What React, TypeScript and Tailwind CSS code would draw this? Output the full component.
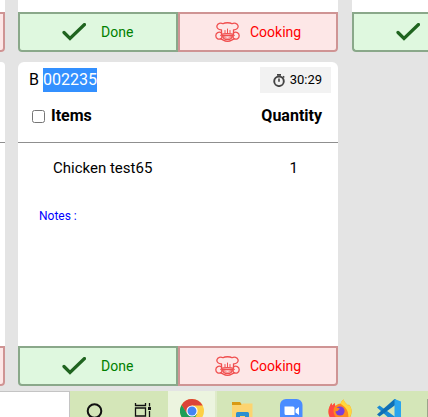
import React from 'react';
import clsx from 'clsx';

interface OrderItem {
  name: string;
  quantity: number;
}

const items: OrderItem[] = [{ name: 'Chicken test65', quantity: 1 }];

const CheckIcon: React.FC = () => (
  <svg viewBox="0 0 24 18" className="h-[18px] w-6 shrink-0" fill="none" aria-hidden="true">
    <path d="M2 9.5l6 6L22.5 1.5" stroke="#1f641f" strokeWidth="3.2" strokeLinecap="round" />
  </svg>
);

const ChefIcon: React.FC = () => (
  <svg
    viewBox="0 0 25 20"
    className="h-5 w-[25px] shrink-0"
    fill="none"
    stroke="#f04f4f"
    strokeWidth="1.3"
    strokeLinecap="round"
    strokeLinejoin="round"
    aria-hidden="true"
  >
    {/* hat */}
    <path d="M6.5 12V7.8C3.4 8 1.400 5.800 2 3.600 2.700 1.300 5.600.300 8 1.700c1.800-1.300 7.200-1.300 9 0 2.400-1.400 5.300-.4 6 1.900.6 2.200-1.400 4.400-4.500 4.200V12" />
    <path d="M10 8.500V11M12.500 7v4M15 8.500V11" strokeWidth="1" />
    <path d="M6.500 12.300c2-1 10-1 12 0" />
    {/* face */}
    <path d="M7.500 13.500h10c-.4 2.800-2.200 4.200-5 4.200s-4.600-1.400-5-4.200z" fill="#f79a9a" />
    <path d="M10 14.500h5l-2.500 1.600z" fill="#fde7e7" stroke="none" />
    {/* hands */}
    <path d="M6.500 10.800C3.800 9.200.800 10.800.800 13.800c0 2.900 3.200 4.200 5.200 2.800 1.400-1 1.300-2.600-.2-3.200" />
    <path d="M18.500 10.800c2.700-1.600 5.700 0 5.700 3 0 2.900-3.200 4.200-5.200 2.800-1.400-1-1.300-2.600.2-3.200" />
    <path d="M6 17c1.600.2 3 2.300 6.500 2.300S17.400 17.200 19 17" />
  </svg>
);

const StopwatchIcon: React.FC = () => (
  <svg viewBox="0 0 12 13" className="h-[13px] w-3" fill="none" stroke="#444" aria-hidden="true">
    <circle cx="6" cy="7.300" r="4.800" strokeWidth="1.900" />
    <path d="M4 .9h4M6 4.500v3.200M10 2.300l1.200 1.200" strokeWidth="1.600" />
  </svg>
);

const actionStyles = {
  done: 'gap-[15px] rounded-bl border-[#8aa88a] bg-[#dff8df] pl-[42px] text-[#008000]',
  cooking: 'gap-[10px] rounded-br border-[#cf9494] bg-[#fde7e7] pl-[35px] text-[#ff0000]',
};

const CardActions: React.FC = () => (
  <div className="flex">
    <button
      type="button"
      className={clsx('flex h-10 w-1/2 items-center border-2 text-sm', actionStyles.done)}
    >
      <CheckIcon />
      Done
    </button>
    <button
      type="button"
      className={clsx('flex h-10 w-1/2 items-center border-2 text-sm', actionStyles.cooking)}
    >
      <ChefIcon />
      Cooking
    </button>
  </div>
);

const OrderCard: React.FC = () => (
  <article className="flex w-80 shrink-0 flex-col rounded-md bg-white">
    <header className="border-b border-[#8f8f8f] pb-[14px]">
      <div className="flex items-start justify-between pt-[5px] pr-[7px] pl-[11px]">
        <h2 className="text-base leading-[26px]">
          B <span className="inline-block bg-[#3390ff] leading-6 text-white">002235</span>
        </h2>
        <div className="flex h-[26px] w-[71px] items-center justify-end gap-[5px] bg-[#f2f2f2] pr-[9px] text-[13px]">
          <StopwatchIcon />
          <time>30:29</time>
        </div>
      </div>
      <div className="mt-[11px] flex items-center justify-between pr-4 pl-[14px] text-base leading-6 font-bold">
        <label className="flex items-center gap-[6px]">
          <input type="checkbox" className="size-[13px]" />
          Items
        </label>
        <span>Quantity</span>
      </div>
    </header>
    <ul className="pt-[15px] pr-10 pl-[35px] text-[15px] leading-5">
      {items.map((item) => (
        <li key={item.name} className="flex justify-between">
          <span>{item.name}</span>
          <span>{item.quantity}</span>
        </li>
      ))}
    </ul>
    <p className="mt-[30px] mb-[122px] pl-[21px] text-xs leading-4 text-[#0000ff]">Notes :</p>
    <CardActions />
  </article>
);

// Bottom part of a card that is scrolled out at the top
const CardEnd: React.FC = () => (
  <div className="w-80 shrink-0 rounded-b bg-white pt-3">
    <CardActions />
  </div>
);

// Left part of a card in the last column, which runs out of the window
const CardStart: React.FC = () => (
  <div className="ml-px min-w-0 flex-1 rounded-bl bg-white pt-3">
    <button
      type="button"
      aria-label="Done"
      className={clsx('flex h-10 w-full items-center border-2 border-r-0', actionStyles.done)}
    >
      <CheckIcon />
    </button>
  </div>
);

// Right edge of a card in the column scrolled out on the left
const CardEdge: React.FC<{ header?: boolean }> = ({ header }) => (
  <div
    className={clsx(
      'flex w-[5px] shrink-0 flex-col justify-between rounded-br bg-white',
      header ? 'rounded-tr' : 'pt-3'
    )}
  >
    {header && <div className="h-[81px] border-b border-[#8f8f8f]" />}
    <div className="h-10 rounded-br border-2 border-l-0 border-[#cf9494] bg-[#fde7e7]" />
  </div>
);

const TaskbarItem: React.FC<{ label: string; active?: boolean; children: React.ReactNode }> = ({
  label,
  active,
  children,
}) => (
  <button
    type="button"
    aria-label={label}
    className={clsx(
      'flex h-10 w-[49px] shrink-0 justify-center pt-2',
      active && 'border-r-2 border-[#dfebca] bg-[#ecf4df]'
    )}
  >
    {children}
  </button>
);

const Taskbar: React.FC = () => (
  <footer className="flex h-[26px] shrink-0 overflow-hidden bg-[#d4e6b8]">
    <div className="h-10 w-[70px] shrink-0 border-t border-r border-[#c4c4c4] bg-white" />
    <TaskbarItem label="Search assistant">
      <svg viewBox="0 0 24 24" className="size-6" fill="none">
        <circle cx="11.500" cy="12" r="6.800" stroke="#111" strokeWidth="2" />
      </svg>
    </TaskbarItem>
    <TaskbarItem label="Task view">
      <svg viewBox="0 0 24 24" className="size-6" fill="none" stroke="#111" strokeWidth="1.300">
        <path d="M3.500 4v2.500h10V4M3.500 9h10v8h-10zM3.500 22v-2.500h10V22M17.500 4v3.500M17.500 12v10" />
        <path d="M16 8h3v3h-3z" fill="#111" stroke="none" />
      </svg>
    </TaskbarItem>
    <TaskbarItem label="Chrome" active>
      <svg viewBox="0 0 24 24" className="size-6">
        <circle cx="12" cy="12" r="12" fill="#fdd044" />
        <path d="M12 6.500h10.600A12 12 0 0 0 1.600 6L7 15l5-3z" fill="#dc4437" />
        <path d="M1.600 6A12 12 0 0 0 12 24l5-9-5-1-4.800.800z" fill="#1b9e58" />
        <circle cx="12" cy="12" r="5.600" fill="#fff" />
        <circle cx="12" cy="12" r="4.500" fill="#4285f4" />
      </svg>
    </TaskbarItem>
    <TaskbarItem label="File explorer">
      <svg viewBox="0 0 24 24" className="size-6">
        <path d="M2 3h8l1.500 2v3H2z" fill="#d99a14" />
        <path d="M2 6h9l2-1.500h9.500V21H2z" fill="#fcd470" />
        <path d="M6 21v-6.500q0-1.500 1.500-1.500h10q1.500 0 1.500 1.500V21h-4v-4h-5v4z" fill="#2d8fd0" />
      </svg>
    </TaskbarItem>
    <TaskbarItem label="Zoom">
      <svg viewBox="0 0 24 24" className="size-6">
        <rect x="1" y="0" width="22.500" height="23" rx="6" fill="#4a8cff" />
        <path d="M5.500 7.500h8.500q1.500 0 1.500 1.500v7H7Q5.500 16 5.500 14.500zM16.500 10.500l3.500-2.500v8l-3.500-2.500z" fill="#fff" />
      </svg>
    </TaskbarItem>
    <TaskbarItem label="Firefox">
      <svg viewBox="0 0 24 24" className="size-6">
        <path
          d="M12 24C5.500 24 .5 19 .5 12.500.5 9 2 6.500 3.300 4l1 2.500L6.500 4l.8 3c2-2 4-2.500 5.200-2.300C13 2.800 14 1.500 15.800.5c.2 3 3.200 4 4.500 6.500l.5-1.500c2 2 2.900 4.600 2.700 7.500C23.300 19.300 18.300 24 12 24z"
          fill="#ff8a1e"
        />
        <path d="M15.800.5c.2 3 3.200 4 4.500 6.500l.5-1.500c2 2 2.900 4.600 2.700 7.500-.2 3-1.500 5-3.200 6.500C21 12 18 8 12.500 4.700 13 2.800 14 1.500 15.800.5z" fill="#ffd83b" />
        <path d="M.5 12.500C.5 9 2 6.500 3.300 4l1 2.500L6.500 4l.8 3C5 9 5 14 7 17l5 6.500C5.500 24 .5 19 .5 12.500z" fill="#ff4a45" />
        <circle cx="12" cy="12" r="4.600" fill="#7a3fd8" />
        <path d="M6 9.500c2-1.500 4 0 6 0L9.500 12 7 12.500z" fill="#ff8a1e" />
      </svg>
    </TaskbarItem>
    <TaskbarItem label="Visual Studio Code">
      <svg viewBox="0 0 24 24" className="size-6">
        <path d="M0 8.500L2.500 6.500 19 18.500v5L17.500 24z" fill="#1a8ad4" />
        <path d="M0 15.500L2.500 17.500 19 5.500V.5L17.500 0z" fill="#0f6fb5" />
        <path d="M17.500 0L24 2.500v19L17.500 24z" fill="#2aa4ee" />
      </svg>
    </TaskbarItem>
    <div className="mt-2 ml-[14px] h-8 flex-1 border-t border-l border-[#9aa38a]" />
  </footer>
);

const App: React.FC = () => {
  return (
    <div className="flex h-screen flex-col overflow-hidden bg-[#e4e4e4] font-[Roboto,sans-serif] text-black">
      <main className="flex flex-1 flex-col gap-[10px] overflow-hidden">
        <div className="flex gap-[13px]">
          <CardEdge />
          <CardEnd />
          <CardStart />
        </div>
        <div className="flex gap-[13px]">
          <CardEdge header />
          <OrderCard />
        </div>
      </main>
      <Taskbar />
    </div>
  );
};

export default App;
